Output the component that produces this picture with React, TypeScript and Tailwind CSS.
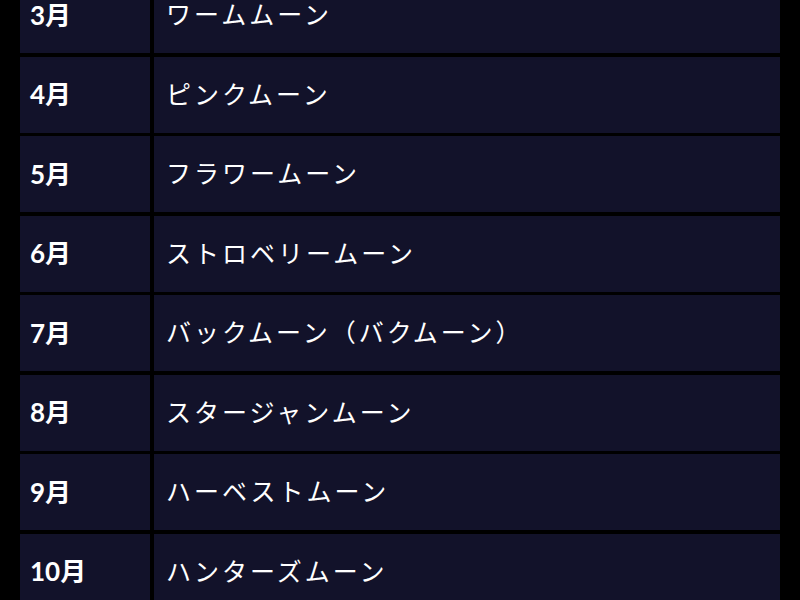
const rows = [
  { month: "2月", name: "スノームーン" },
  { month: "3月", name: "ワームムーン" },
  { month: "4月", name: "ピンクムーン" },
  { month: "5月", name: "フラワームーン" },
  { month: "6月", name: "ストロベリームーン" },
  { month: "7月", name: "バックムーン（バクムーン）" },
  { month: "8月", name: "スタージャンムーン" },
  { month: "9月", name: "ハーベストムーン" },
  { month: "10月", name: "ハンターズムーン" },
  { month: "11月", name: "ビーバームーン" },
];

export default function App() {
  return (
    <div className="h-[600px] w-[800px] overflow-hidden bg-black">
      {/* scrolled table: the 3月 row is cut off at the top */}
      <div
        className="mx-[20px] -mt-[102.5px] grid grid-cols-[130px_1fr] gap-x-[4px] gap-y-[3.5px] text-white"
        style={{ fontFamily: 'Lato, "Noto Sans CJK JP", sans-serif' }}
      >
        {rows.map((r) => (
          <div key={r.month} className="contents">
            <div className="flex h-[76px] items-center bg-[#12122a] px-[10px] text-[26px] font-bold">
              {r.month}
            </div>
            <div className="flex h-[76px] items-center bg-[#12122a] px-[12px] text-[25px] tracking-[3px]">
              {r.name}
            </div>
          </div>
        ))}
      </div>
    </div>
  );
}
